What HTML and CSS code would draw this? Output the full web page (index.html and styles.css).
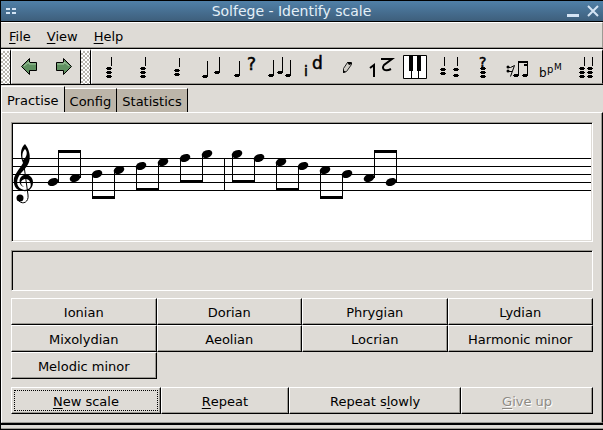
FILE: index.html
```html
<!DOCTYPE html>
<html lang="en">
<head>
<meta charset="utf-8">
<title>Solfege - Identify scale</title>
<link rel="stylesheet" href="styles.css">
</head>
<body>
<div class="window">
  <header class="titlebar">
    <svg class="win-menu" width="10" height="6" aria-hidden="true"><path d="M0 0h4v2H0zM6 0h4v2H6zM0 4h4v2H0zM6 4h4v2H6z"/></svg>
    <h1>Solfege - Identify scale</h1>
    <div class="win-controls">
      <button type="button" aria-label="Minimize"><svg width="12" height="12"><path d="M0 10.5h12" stroke-width="3"/></svg></button>
      <button type="button" aria-label="Close"><svg width="12" height="12"><path d="M1 1l10 10M11 1L1 11" stroke-width="2"/></svg></button>
    </div>
  </header>
  <nav class="menubar">
    <button type="button"><u>F</u>ile</button>
    <button type="button"><u>V</u>iew</button>
    <button type="button"><u>H</u>elp</button>
  </nav>
  <div class="toolbars">
    <div class="handle"></div>
    <div class="toolbar nav">
      <button type="button" aria-label="Back"><svg width="24" height="24"><path class="arrow" d="M4.500 11.500l8-8v4h7v8h-7v4z"/><path class="shine" d="M7 11l5-4v2h7"/></svg></button>
      <button type="button" aria-label="Forward"><svg width="24" height="24"><path class="arrow" d="M20.500 11.500l-8-8v4h-7v8h7v4z"/><path class="shine" d="M6 9h7V7l5 4"/></svg></button>
    </div>
    <div class="handle"></div>
    <div class="toolbar tools">
      <button type="button" aria-label="Harmonic interval"><svg width="24" height="24"><path d="M14 2h1v9h-1z"/><use href="#head" x="9" y="12"/><use href="#head" x="9" y="16"/><use href="#head" x="9" y="20"/></svg></button>
      <button type="button" aria-label="Chord"><svg width="24" height="24"><path d="M14 2h1v9h-1z"/><use href="#head" x="9" y="12"/><use href="#head" x="9" y="16"/><use href="#head" x="9" y="20"/></svg></button>
      <button type="button" aria-label="Sing interval"><svg width="24" height="24"><path d="M14 3h1v9h-1z"/><use href="#head" x="9" y="14"/><use href="#head" x="9" y="18"/></svg></button>
      <button type="button" aria-label="Melodic interval"><svg width="24" height="24"><path d="M8 6h1v15H8zM20 2h1v15h-1z"/><use href="#head" x="3" y="20"/><use href="#head" x="15" y="16"/></svg></button>
      <button type="button" aria-label="Identify tone"><svg width="24" height="24"><path d="M6 6h1v14H6z"/><use href="#head" x="1" y="19"/><text x="14" y="15" font-size="17" stroke="#000" stroke-width=".5">?</text></svg></button>
      <button type="button" aria-label="Twelve tone"><svg width="24" height="24"><path d="M6 5h1v15H6zM15 2h1v15h-1zM23 5h1v15h-1z"/><use href="#head" x="1" y="19"/><use href="#head" x="10" y="16"/><use href="#head" x="18" y="19"/></svg></button>
      <button type="button" aria-label="Identify note"><svg width="24" height="24"><text x="3" y="21" font-size="14" stroke="#000" stroke-width=".5">i</text><text x="11" y="14" font-size="17" stroke="#000" stroke-width=".5">d</text></svg></button>
      <button type="button" aria-label="Dictation"><svg width="24" height="24"><path class="pencil" d="M8.500 17.500v-4l4-6h4v2l-5 7z"/><path d="M8 15l3 2-3 1zM12 7h4l1 2-3 1z"/></svg></button>
      <button type="button" aria-label="Numbers"><svg width="24" height="24"><path class="line thick" d="M1 13l4-3v12M12 4h11l-8 6c-3 4 1 7 7 4"/></svg></button>
      <button type="button" aria-label="Scale"><svg width="24" height="24"><path class="white" d="M.5 .5h23v23H.5z"/><path d="M6 0h4v16H6zM14 0h4v16h-4zM8 16h1v8H8zM15 16h1v8h-1z"/></svg></button>
      <button type="button" aria-label="Compare intervals"><svg width="24" height="24"><path d="M7 2h1v9H7zM20 2h1v9h-1z"/><use href="#head" x="3" y="13"/><use href="#head" x="3" y="17"/><use href="#head" x="16" y="13"/><use href="#head" x="16" y="19"/></svg></button>
      <button type="button" aria-label="Identify chord"><svg width="24" height="24"><text x="8" y="12" font-size="14" stroke="#000" stroke-width=".5">?</text><use href="#head" x="9" y="12"/><use href="#head" x="9" y="16"/><use href="#head" x="9" y="20"/></svg></button>
      <button type="button" aria-label="Rhythm"><svg width="24" height="24"><path class="line" d="M2.500 12.500h3l4-2-4 11M3 16.500h4"/><circle cx="3" cy="12" r="1.500"/><circle cx="3" cy="16" r="1.500"/><path d="M13 6h10v14h-1V11h-3V9h3V8h-8v12h-1z"/><use href="#head" x="8" y="19"/><use href="#head" x="17" y="19"/></svg></button>
      <button type="button" aria-label="Tempo"><svg width="24" height="24"><text x="0" y="22" font-size="12">b</text><text x="8" y="18" font-size="10">p</text><text x="15" y="15" font-size="9">M</text></svg></button>
      <button type="button" aria-label="Cadence"><svg width="24" height="24"><path d="M11 2h1v9h-1zM19 2h1v9h-1z"/><use href="#head" x="6" y="12"/><use href="#head" x="6" y="16"/><use href="#head" x="6" y="20"/><use href="#head" x="14" y="12"/><use href="#head" x="14" y="16"/><use href="#head" x="14" y="20"/></svg></button>
    </div>
  </div>
  <div class="tabs" role="tablist">
    <button type="button" role="tab" aria-selected="true">Practise</button>
    <button type="button" role="tab" aria-selected="false">Config</button>
    <button type="button" role="tab" aria-selected="false">Statistics</button>
  </div>
  <main class="pane">
    <div class="score">
      <svg width="100%" height="116" role="img" aria-label="Scale in notes">
        <defs>
          <path id="head" d="M1 0h4v1h1v1H5v1H1V2H0V1h1z"/>
          <ellipse id="note" rx="5.500" ry="3.800" transform="rotate(-22)"/>
        </defs>
        <g class="staff">
          <rect y="34" width="100%" height="1"/><rect y="42" width="100%" height="1"/><rect y="50" width="100%" height="1"/><rect y="58" width="100%" height="1"/><rect y="66" width="100%" height="1"/>
          <rect x="211" y="34" width="1" height="33"/>
        </g>
        <path d="M12 20C16 25 18 32 16 38C14 44 9 47 6 52C3 57 3 64 11 66C17 66 19 62 17 58C15 53 8 55 8 59C8 61 10 62 11 63C6 62 5 55 9 52C13 48 20 52 20 58C20 64 16 68 10 67C2 67 0 60 1 54C3 48 8 43 10 39C7 32 7 24 12 20zM12 25C9 28 9 32 10 36C14 33 15 28 12 25z"/>
        <path class="line" d="M10.500 38L15 71C16 78 10 81 6 77"/>
        <circle cx="7" cy="74" r="3.500"/>
        <g>
          <use href="#note" x="40" y="58"/><use href="#note" x="62" y="54"/><use href="#note" x="84" y="50"/><use href="#note" x="106" y="46"/>
          <use href="#note" x="128" y="42"/><use href="#note" x="150" y="38"/><use href="#note" x="172" y="34"/><use href="#note" x="194" y="30"/>
          <use href="#note" x="224" y="30"/><use href="#note" x="246" y="34"/><use href="#note" x="268" y="38"/><use href="#note" x="290" y="42"/>
          <use href="#note" x="312" y="46"/><use href="#note" x="334" y="50"/><use href="#note" x="356" y="54"/><use href="#note" x="378" y="58"/>
        </g>
        <path d="M45 58V26h23v28h-1V29H46v29z"/>
        <path d="M79 51v24h23V47h-1v25H80V51z"/>
        <path d="M123 43v24h23V39h-1v25h-21V43z"/>
        <path d="M167 35v24h23V31h-1v25h-21V35z"/>
        <path d="M219 31v28h23V35h-1v21h-21V31z"/>
        <path d="M263 39v28h23V43h-1v21h-21V39z"/>
        <path d="M307 47v28h23V51h-1v21h-21V47z"/>
        <path d="M361 54V26h23v32h-1V29h-21v25z"/>
      </svg>
    </div>
    <div class="message"></div>
    <div class="scales">
      <button type="button">Ionian</button>
      <button type="button">Dorian</button>
      <button type="button">Phrygian</button>
      <button type="button">Lydian</button>
      <button type="button">Mixolydian</button>
      <button type="button">Aeolian</button>
      <button type="button">Locrian</button>
      <button type="button">Harmonic minor</button>
      <button type="button">Melodic minor</button>
    </div>
    <div class="actions">
      <button type="button" class="focused"><span><u>N</u>ew scale</span></button>
      <button type="button"><span><u>R</u>epeat</span></button>
      <button type="button"><span>Repeat s<u>l</u>owly</span></button>
      <button type="button" disabled><span><u>G</u>ive up</span></button>
    </div>
  </main>
  <footer class="grip"></footer>
</div>
</body>
</html>
```
FILE: styles.css
```css
* { box-sizing: border-box; }
body {
  margin: 0;
  background: #dedbd6;
  color: #000;
  font: 13px/16px "DejaVu Sans", sans-serif;
}
button {
  margin: 0;
  padding: 0;
  border: 0;
  background: none;
  color: inherit;
  font: inherit;
}
svg { display: block; overflow: visible; }
u { text-decoration: underline; text-underline-offset: 2px; }

.window {
  display: flex;
  flex-direction: column;
  min-height: 100vh;
  border-left: 1px solid #000;
  border-bottom: 1px solid #000;
}

.titlebar {
  display: flex;
  align-items: center;
  height: 22px;
  padding: 0 4px 0 5px;
  border-top: 1px solid #000;
  border-bottom: 1px solid #000;
  background: linear-gradient(#5080a8, #3e5f7c);
  color: #e4f0f8;
}
.titlebar h1 { flex: 1; margin: 0; font-size: 14px; font-weight: normal; text-align: center; }
.win-menu { fill: #d4e4f4; }
.win-controls { display: flex; gap: 8px; }
.win-controls svg { fill: none; stroke: #d4e4f4; }

.menubar {
  display: flex;
  gap: 16px;
  height: 26px;
  padding: 3px 8px 0;
  border-top: 1px solid #fff;
  border-right: 1px solid #9c9a94;
  border-bottom: 1px solid #9c9a94;
}

.toolbars {
  display: flex;
  height: 37px;
  border-top: 1px solid #000;
  border-bottom: 1px solid #000;
}
.handle {
  width: 10px;
  border-top: 2px solid #fff;
  border-right: 1px solid #000;
  background: radial-gradient(circle at 1px 1px, #fff 1px, transparent 1px) 0 0 / 4px 4px, radial-gradient(circle at 3px 3px, #fff 1px, #b8b5ae 1px) 0 0 / 4px 4px;
}
.toolbar {
  display: flex;
  align-items: center;
  border: 1px solid #9c9a94;
  border-top: 2px solid #fff;
  border-left-color: #fff;
}
.toolbar button { width: 34px; display: flex; justify-content: center; }
.nav { border-right-color: #000; }
.tools { flex: 1; border-right-color: #000; }
.arrow { fill: #5f9060; stroke: #000; }
.shine { fill: none; stroke: #a4c8a2; }
.line { fill: none; stroke: #000; }
.thick { stroke-width: 2; }
.white { fill: #fff; stroke: #000; }
.pencil { fill: #d0cdc6; stroke: #222; }

.tabs {
  display: flex;
  align-items: flex-end;
  height: 27px;
  padding-top: 1px;
}
.tabs button {
  height: 24px;
  padding: 2px 5px 0;
  border-top: 1px solid #fff;
  border-right: 1px solid #000;
  background: #bcb5a9;
}
.tabs button[aria-selected="true"] { height: 26px; padding: 2px 5px 0; background: none; border-left: 1px solid #fff; }

.pane {
  flex: 1;
  display: flex;
  flex-direction: column;
  padding: 9px 8px 8px 9px;
  border: 1px solid #fff;
  border-right: 1px solid #000;
  border-bottom: 1px solid #9c9a94;
  box-shadow: inset -1px 0 #9c9a94;
}
.score, .message {
  border: 1px solid #9c9a94;
  border-right-color: #fff;
  border-bottom-color: #fff;
  box-shadow: inset 1px 1px #000, inset -1px -1px #dedbd6;
}
.score { margin-right: 1px; padding: 1px; background: #fff; }
.message { height: 41px; margin: 8px 1px 0 0; }

.scales {
  display: grid;
  grid-template-columns: repeat(4, 1fr);
  margin: 7px 1px 0 0;
}
.scales button, .actions button {
  height: 27px;
  padding-top: 2px;
  border: 1px solid #fff;
  border-right-color: #000;
  border-bottom-color: #000;
  box-shadow: inset -1px -1px #9c9a94;
}
.actions { display: flex; margin: 8px 1px 0 0; }
.actions button { flex: 1 1 auto; padding: 2px; }
.actions span { display: flex; align-items: center; justify-content: center; height: 100%; padding-top: 2px; white-space: pre; }
.focused span { border: 1px dotted #000; }
.actions button:disabled { color: #8e8b85; text-shadow: 1px 1px #fff; }

.grip { height: 6px; border-top: 2px solid #000; border-bottom: 1px solid #9c9a94; }
```
